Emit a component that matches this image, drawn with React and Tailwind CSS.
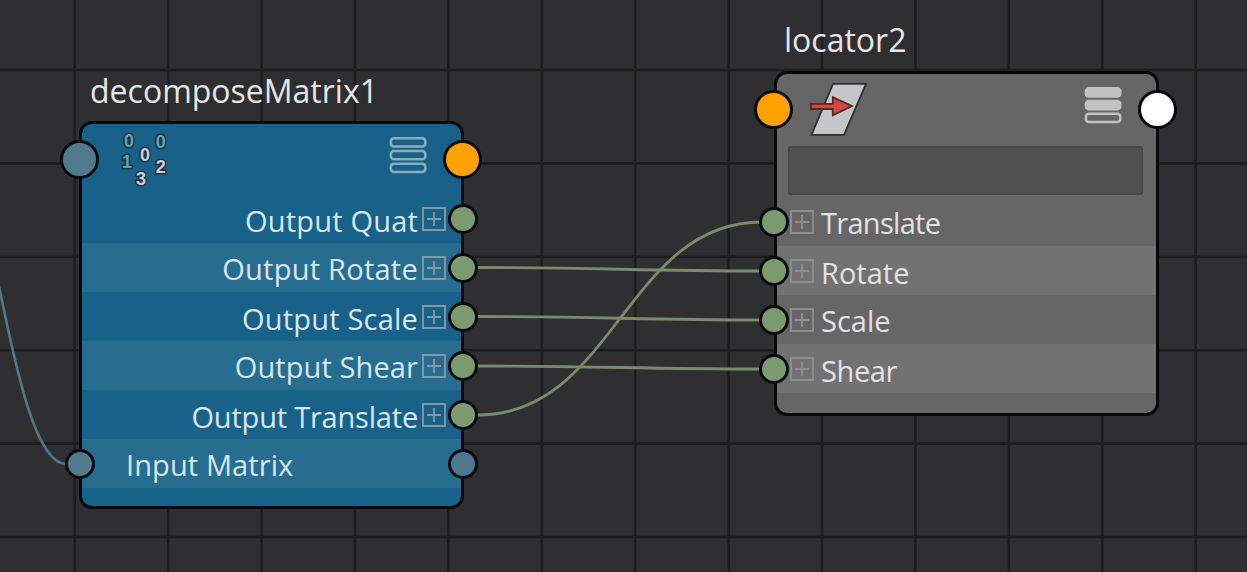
import React from "react";

const columns = Array.from({ length: 13 }, (_, i) => 74.8 + i * 93.4);
const lines = Array.from({ length: 6 }, (_, i) => 70 + i * 93.4);

const wires = [
  "M476 267.5 C600 267.5 640 271 762 271",
  "M476 316.5 C600 316.5 640 320 762 320",
  "M476 366 C600 366 640 369 762 369",
  "M478 415 C614 415 626 222 762 222",
];

function Canvas() {
  return (
    <svg className="absolute inset-0" width="1247" height="572" fill="none">
      <g stroke="#1e1d1d" strokeWidth="2.6">
        {columns.map((x) => (
          <path key={x} d={`M${x} 0V572`} />
        ))}
        {lines.map((y) => (
          <path key={y} d={`M0 ${y}H1247`} />
        ))}
      </g>
      <path d="M-1 286 C16 370 36 464 66 464" stroke="#4f7788" strokeWidth="2.6" />
      <g stroke="#7d8b6c" strokeWidth="2.8">
        {wires.map((d) => (
          <path key={d} d={d} />
        ))}
      </g>
    </svg>
  );
}

function NodePort({ className }) {
  return <span className={`size-[39px] shrink-0 rounded-full border-[3px] border-[#060a0c] ${className}`} />;
}

function RowPort({ className }) {
  return <span className={`size-[30px] shrink-0 rounded-full border-[3px] border-[#060a0c] ${className}`} />;
}

function Expander({ className }) {
  return (
    <svg width="24" height="24" viewBox="0 0 24 24" fill="none" strokeWidth="1.8" className={`shrink-0 ${className}`}>
      <path d="M1 1H23V23H1ZM5 12H19M12 5V19" />
    </svg>
  );
}

function MatrixIcon() {
  const digits = [
    ["0", 129, 146.5, "#5fa5b0"],
    ["0", 160.8, 147.7, "#5fa5b0"],
    ["1", 127, 167.7, "#5fa5b0"],
    ["0", 145, 161.2, "#d3ccd2"],
    ["2", 160.8, 173.2, "#d3ccd2"],
    ["3", 141, 184.9, "#d3ccd2"],
  ];
  return (
    <svg width="52" height="58" viewBox="118 131 52 58" className="shrink-0">
      {digits.map(([d, x, y, fill]) => (
        <text
          key={`${x}-${y}`}
          x={x}
          y={y}
          fill={fill}
          stroke="#22323d"
          strokeWidth="3"
          paintOrder="stroke"
          textAnchor="middle"
          className="font-['Liberation_Sans',sans-serif] text-[18px] font-bold"
        >
          {d}
        </text>
      ))}
    </svg>
  );
}

function LocatorIcon() {
  return (
    <svg width="60" height="56" viewBox="809 81 60 56" className="shrink-0" strokeWidth="1.8">
      <path d="M833 83.8H866L844 134.8H811.5Z" fill="#c5c6c8" stroke="#303033" />
      <path d="M811 103.8H832.8V97.2L852 106L832.8 115.4V109H811Z" fill="#cf4a45" stroke="#5a2726" />
    </svg>
  );
}

function ViewModeIcon({ filled, className }) {
  return (
    <svg width="38" height="39" viewBox="0 0 38 39" fill="none" strokeWidth="2.5" className={`shrink-0 ${className}`}>
      {[2.2, 15, 27.8].map((y, i) => (
        <rect key={y} x="1.9" y={y} width="34.4" height="8.3" rx="3" fill={filled && i < 2 ? "currentColor" : "none"} stroke="currentColor" />
      ))}
    </svg>
  );
}

const outputs = [
  ["Output Quat", "bg-[#186289]", "tracking-[0.2px] pt-[5px]"],
  ["Output Rotate", "bg-[#266d90]", "tracking-[0.25px] pt-[3px]"],
  ["Output Scale", "bg-[#186289]", "tracking-[0.2px] pt-[5px]"],
  ["Output Shear", "bg-[#266d90]", "tracking-[0.1px] pt-[3px]"],
  ["Output Translate", "bg-[#186289]", "tracking-[-0.2px] pt-[5px]"],
];

function DecomposeMatrixNode() {
  return (
    <section className="absolute left-[79px] top-[69px] flex w-[385px] flex-col">
      <h2 className="h-[52px] whitespace-nowrap pl-[11px] text-[32px] leading-[44px] text-[#e6e6e6]">decomposeMatrix1</h2>
      <div className="flex h-[388px] flex-col rounded-[13px] border-[3px] border-[#060a0c] bg-[#186289] text-[29px] leading-[40px] text-[#d9e6ee]">
        <header className="flex h-[70px] shrink-0 items-start">
          <NodePort className="-ml-[22px] mt-4 bg-[#517a8c]" />
          <div className="flex grow items-start justify-between pl-[19px] pr-4 pt-[7px]">
            <MatrixIcon />
            <ViewModeIcon className="mt-[5px] text-[#89adbf]" />
          </div>
          <NodePort className="-mr-[21px] mt-4 bg-[#ffa200]" />
        </header>
        {outputs.map(([label, tone, text]) => (
          <div key={label} className={`flex h-[49px] shrink-0 items-center justify-end ${tone}`}>
            <span className={`mr-1 whitespace-nowrap ${text}`}>{label}</span>
            <Expander className="mr-0.5 stroke-[#8799a4]" />
            <RowPort className="-mr-[17px] bg-[#7c9a70]" />
          </div>
        ))}
        <div className="flex h-[49px] shrink-0 items-center justify-between bg-[#266d90]">
          <RowPort className="-ml-[17px] bg-[#517a8c]" />
          <span className="grow whitespace-nowrap pl-[31px] pt-[3px] tracking-[0.1px]">Input Matrix</span>
          <RowPort className="-mr-[17px] bg-[#4f788f]" />
        </div>
      </div>
    </section>
  );
}

const inputs = [
  ["Translate", "bg-[#666667]", "tracking-[-0.7px] pt-[3px]"],
  ["Rotate", "bg-[#727273]", "pt-[5px]"],
  ["Scale", "bg-[#666667]", "pt-[3px]"],
  ["Shear", "bg-[#727273]", "tracking-[-0.4px] pt-[5px]"],
];

function LocatorNode() {
  return (
    <section className="absolute left-[774px] top-[18px] flex w-[385px] flex-col">
      <h2 className="h-[53px] whitespace-nowrap pl-[10px] text-[32px] leading-[44px] text-[#e6e6e6]">locator2</h2>
      <div className="flex h-[345px] flex-col rounded-[13px] border-[3px] border-[#060707] bg-[#666667] text-[29px] leading-[40px] text-[#e2e2e2]">
        <header className="flex h-[72px] shrink-0 items-start">
          <NodePort className="-ml-[23px] mt-4 bg-[#ffa200]" />
          <div className="flex grow items-start justify-between pl-4 pr-4 pt-[7px]">
            <LocatorIcon />
            <ViewModeIcon filled className="mt-[5px] text-[#c2c2c3]" />
          </div>
          <NodePort className="-mr-[21px] mt-4 bg-white" />
        </header>
        <div className="ml-[11px] mr-[13px] h-[49px] shrink-0 rounded-[2px] border-2 border-[#48484a] bg-[#505051]" />
        <div className="flex flex-col pt-[2px]">
          {inputs.map(([label, tone, text]) => (
            <div key={label} className={`flex h-[49px] shrink-0 items-center ${tone}`}>
              <RowPort className="-ml-[18px] bg-[#7c9a70]" />
              <Expander className="ml-px stroke-[#8f8f90]" />
              <span className={`ml-[7px] whitespace-nowrap ${text}`}>{label}</span>
            </div>
          ))}
        </div>
      </div>
    </section>
  );
}

export default function App() {
  return (
    <main className="relative h-[572px] w-[1247px] overflow-hidden bg-[#2f2f31] font-['Open_Sans','Noto_Sans',sans-serif]">
      <Canvas />
      <DecomposeMatrixNode />
      <LocatorNode />
    </main>
  );
}
